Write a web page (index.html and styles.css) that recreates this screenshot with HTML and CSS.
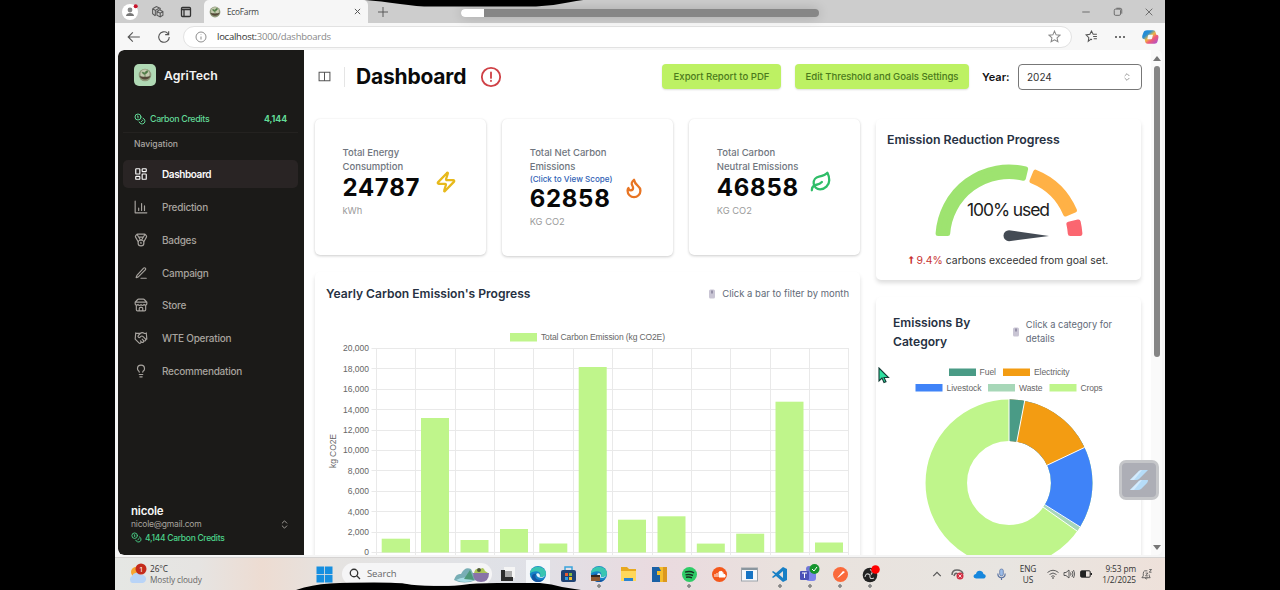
FILE: index.html
```html
<!DOCTYPE html>
<html lang="en">
<head>
<meta charset="utf-8">
<title>EcoFarm</title>
<link rel="stylesheet" href="styles.css">
</head>
<body>
<svg class="defs" width="0" height="0">
  <defs>
    <symbol id="coins" viewBox="0 0 24 24"><circle cx="8" cy="8" r="6"/><path d="M18.09 10.37A6 6 0 1 1 10.34 18M7 6h1v4M16.7 13.9l.7.7-2.8 2.8"/></symbol>
    <symbol id="updown" viewBox="0 0 24 24"><path d="m7 15 5 5 5-5M7 9l5-5 5 5"/></symbol>
    <symbol id="sprout" viewBox="0 0 20 20"><circle cx="10" cy="10" r="9" fill="#8f9a7b"/><circle cx="10" cy="8.5" r="6.5" fill="#c5caaf"/><path d="M2 11c2 2 14 2 16 0a8.6 8.6 0 0 1-16 0z" fill="#544838"/><path d="M10 13V6M10 9C7 9 6 7 6 6c2 0 4 1 4 3zm0-1c0-3 2-4 4-4 0 3-2 4-4 4z" fill="#4d7a45" stroke="#4d7a45"/></symbol>
    <symbol id="mouse" viewBox="0 0 8 12"><rect x="1" y="1.500" width="6" height="9" rx="1.500" fill="#c9c5d4"/><rect x="3" y="2.500" width="2" height="3" fill="#9691a8"/></symbol>
    <symbol id="edge" viewBox="0 0 20 20"><circle cx="10" cy="10" r="9" fill="#1683c7"/><path d="M1 10C1 0 17-1 19 9c0 4-4 5-7 4 2-4-1-6-4-6-3 0-6 1-7 3z" fill="#39c5b2"/><path d="M8 10c-3 5 2 8 8 6-3 4-9 4-12 0-2-3 0-7 4-6z" fill="#1456a2"/><path d="M8 10c2-2 5 0 4 3 2 1 5 0 6-2-1 4-9 5-10-1z" fill="#e6f5fb"/></symbol>
    <linearGradient id="cop" x1="0" y1="0" x2="1" y2="1"><stop offset="0" stop-color="#1787e0"/><stop offset=".3" stop-color="#2a8fd0"/><stop offset=".48" stop-color="#eeb842"/><stop offset=".65" stop-color="#ef5a76"/><stop offset="1" stop-color="#a04fe0"/></linearGradient>
  </defs>
</svg>

<div class="window">
  <header class="tabbar">
    <div class="tab-tools">
      <span class="profile"><svg width="16" height="16" viewBox="0 0 16 16"><circle cx="8" cy="8" r="8" fill="#fff"/><circle cx="8" cy="6" r="2.4" fill="#888"/><path d="M4 12c0-4 8-4 8 0z" fill="#777"/><circle cx="13.7" cy="2.2" r="2" fill="#c8152d"/></svg></span>
      <svg class="line" width="13" height="13" viewBox="0 0 24 24"><path d="M3 7l7-4 7 3v3M3 7v9l5 4M3 7l5 3 7-4M8 10v10M11 12l5-3 6 3v7l-5 3-6-3zM11 12l6 3 5-3M17 15v7"/></svg>
      <svg class="line bold" width="12" height="12" viewBox="0 0 24 24"><rect x="3" y="3" width="18" height="18" rx="2"/><path d="M3 7h18M8 7v14"/></svg>
    </div>
    <div class="tab"><svg width="12" height="12"><use href="#sprout"/></svg><span class="tab-title">EcoFarm</span><svg class="line" width="9" height="9" viewBox="0 0 24 24"><path d="M5 5l14 14M19 5L5 19" stroke-width="2.6"/></svg></div>
    <svg class="line plus" width="12" height="12" viewBox="0 0 24 24"><path d="M12 2v20M2 12h20"/></svg>
    <div class="winbtns">
      <svg class="line" width="10" height="10" viewBox="0 0 24 24"><path d="M3 12h18"/></svg>
      <svg class="line" width="10" height="10" viewBox="0 0 24 24"><rect x="3" y="5" width="15" height="15" rx="3"/><path d="M8 3h9a4 4 0 0 1 4 4v9"/></svg>
      <svg class="line" width="10" height="10" viewBox="0 0 24 24"><path d="M4 4l16 16M20 4L4 20"/></svg>
    </div>
  </header>

  <div class="toolbar">
    <svg class="line" width="14" height="14" viewBox="0 0 24 24"><path d="M22 12H3M10 4l-8 8 8 8"/></svg>
    <svg class="line" width="14" height="14" viewBox="0 0 24 24"><path d="M21 12a9 9 0 1 1-3-6.700L20 7M20 2v6h-6"/></svg>
    <div class="address">
      <svg class="line faint" width="12" height="12" viewBox="0 0 24 24"><circle cx="12" cy="12" r="10"/><path d="M12 11v6M12 7v1"/></svg>
      <span class="url"><b>localhost:</b>3000/dashboards</span>
      <svg class="line faint" width="13" height="13" viewBox="0 0 24 24"><path d="M12 2l3 7 7 .7-5.300 4.800 1.600 7.200L12 18l-6.300 3.700 1.600-7.200L2 9.700 9 9z"/></svg>
    </div>
    <svg class="line" width="13" height="13" viewBox="0 0 24 24"><path d="M13 18l-2-1-5 4 1-7-5-5 7-1 3-6 3 6h7M15 12h7M16 16h6"/></svg>
    <svg width="12" height="12" viewBox="0 0 24 24" fill="#444"><circle cx="4" cy="12" r="2"/><circle cx="12" cy="12" r="2"/><circle cx="20" cy="12" r="2"/></svg>
    <svg width="18" height="18" viewBox="0 0 24 24"><path d="M8 3h8c2 0 3 1 3.500 3l.8 3c3 0 3.500 2 2.700 5l-1 4c-.7 2-2 3-4 3H9c-2 0-3-1-3.500-3L5 15c-3 0-4-2-3.200-5l1.500-4C4 4 6 3 8 3zm3 6c-1 0-1.500.5-1.800 1.500L8.500 15H13c1 0 1.500-.5 1.800-1.500L16 9z" fill="url(#cop)" fill-rule="evenodd"/></svg>
  </div>

  <div class="app">
    <aside class="sidebar">
      <div class="brand"><span class="logo"><svg width="14" height="14"><use href="#sprout"/></svg></span>AgriTech</div>
      <div class="credits"><svg class="ic" width="12" height="12"><use href="#coins"/></svg><span>Carbon Credits</span><b>4,144</b></div>
      <div class="navlabel">Navigation</div>
      <nav>
        <a class="item active"><svg class="ic" width="14" height="14" viewBox="0 0 24 24"><rect x="3" y="3" width="7" height="9" rx="1"/><rect x="14" y="3" width="7" height="5" rx="1"/><rect x="14" y="12" width="7" height="9" rx="1"/><rect x="3" y="16" width="7" height="5" rx="1"/></svg>Dashboard</a>
        <a class="item"><svg class="ic" width="14" height="14" viewBox="0 0 24 24"><path d="M2 2v20h20M8 18v-4M13 18V6M18 18v-8"/></svg>Prediction</a>
        <a class="item"><svg class="ic" width="14" height="14" viewBox="0 0 24 24"><path d="M7.200 15 2.700 7.100a2 2 0 0 1 .1-2.200l1.600-2.100A2 2 0 0 1 6 2h12a2 2 0 0 1 1.600.8l1.600 2.100a2 2 0 0 1 .1 2.200L16.800 15M11 12 5.100 2.200M13 12l5.900-9.800M8 7h8M12 18v-2h-.5"/><circle cx="12" cy="17" r="5"/></svg>Badges</a>
        <a class="item"><svg class="ic" width="14" height="14" viewBox="0 0 24 24"><path d="M12 21h9M16.400 3.600a1 1 0 0 1 3 3L7.400 18.600a2 2 0 0 1-.9.500l-2.800.8.800-2.800a2 2 0 0 1 .5-.9z"/></svg>Campaign</a>
        <a class="item"><svg class="ic" width="14" height="14" viewBox="0 0 24 24"><path d="m2 7 4.400-4.400A2 2 0 0 1 7.800 2h8.400a2 2 0 0 1 1.400.6L22 7M4 12v8a2 2 0 0 0 2 2h12a2 2 0 0 0 2-2v-8M15 22v-4a2 2 0 0 0-2-2h-2a2 2 0 0 0-2 2v4M2 7h20v3a2.700 2.700 0 0 1-5 1 2.700 2.700 0 0 1-5 0 2.700 2.700 0 0 1-5 0 2.700 2.700 0 0 1-5-1z"/></svg>Store</a>
        <a class="item"><svg class="ic" width="14" height="14" viewBox="0 0 24 24"><path d="m11 17 2 2a1 1 0 1 0 3-3M14 14l2.500 2.500a1 1 0 1 0 3-3l-3.900-3.900a3 3 0 0 0-4.200 0l-.9.900a1 1 0 1 1-3-3l2.800-2.800a5.800 5.800 0 0 1 7.100-.9l.5.300a2 2 0 0 0 1.400.2L21 4M21 3l1 11h-2M3 3 2 14l6.500 6.500a1 1 0 1 0 3-3M3 4h8"/></svg>WTE Operation</a>
        <a class="item"><svg class="ic" width="14" height="14" viewBox="0 0 24 24"><path d="M15 14c.2-1 .7-1.700 1.500-2.500 1-.9 1.500-2.200 1.500-3.500A6 6 0 0 0 6 8c0 1 .2 2.200 1.500 3.500.7.7 1.300 1.500 1.500 2.500M9 18h6M10 22h4"/></svg>Recommendation</a>
      </nav>
      <div class="user">
        <div><div class="uname">nicole</div><div class="umail">nicole@gmail.com</div><div class="ucred"><svg class="ic" width="11" height="11"><use href="#coins"/></svg>4,144 Carbon Credits</div></div>
        <svg class="ic" width="11" height="11"><use href="#updown"/></svg>
      </div>
    </aside>

    <main class="main">
      <div class="head">
        <svg class="line toggle" width="13" height="13" viewBox="0 0 24 24"><path d="M2 4h20v16H2zM12 4v16"/></svg>
        <span class="divider"></span>
        <h1>Dashboard</h1>
        <svg class="alert" width="22" height="22" viewBox="0 0 24 24"><circle cx="12" cy="12" r="10"/><path d="M12 7v6M12 16v.4"/></svg>
        <button class="btn b1">Export Report to PDF</button>
        <button class="btn b2">Edit Threshold and Goals Settings</button>
        <span class="year">Year:</span>
        <div class="select"><span>2024</span><svg class="ic" width="10" height="10"><use href="#updown"/></svg></div>
      </div>

      <div class="columns">
        <section class="left">
          <div class="stats">
            <div class="card stat"><div><p class="label">Total Energy<br>Consumption</p><p class="num">24787</p><p class="unit">kWh</p></div>
              <svg class="sic yellow" width="22" height="22" viewBox="0 0 24 24"><path d="M4 14a1 1 0 0 1-.8-1.600l9.900-10.200a.5.500 0 0 1 .9.500l-1.900 6A1 1 0 0 0 13 10h7a1 1 0 0 1 .8 1.600l-9.900 10.200a.5.500 0 0 1-.9-.5l1.900-6A1 1 0 0 0 11 14z"/></svg></div>
            <div class="card stat tall"><div><p class="label">Total Net Carbon<br>Emissions</p><p class="scope">(Click to View Scope)</p><p class="num">62858</p><p class="unit">KG CO2</p></div>
              <svg class="sic orange" width="22" height="22" viewBox="0 0 24 24"><path d="M8.500 14.500A2.500 2.500 0 0 0 11 12c0-1.400-.5-2-1-3-1.100-2.100-.2-4.100 2-6 .5 2.500 2 4.900 4 6.500s3 3.500 3 5.500a7 7 0 1 1-14 0c0-1.200.4-2.300 1-3a2.500 2.500 0 0 0 2.500 2.500z"/></svg></div>
            <div class="card stat"><div><p class="label">Total Carbon<br>Neutral Emissions</p><p class="num">46858</p><p class="unit">KG CO2</p></div>
              <svg class="sic green" width="22" height="22" viewBox="0 0 24 24"><path d="M11 20A7 7 0 0 1 9.800 6.100C15.500 5 17 4.500 19 2c1 2 2 4.200 2 8 0 5.500-4.800 10-10 10zM2 21c0-3 1.900-5.400 5.100-6 2.400-.5 4.900-2 5.900-3"/></svg></div>
          </div>
          <div class="card chart">
            <div class="chart-head"><h2 class="t-year">Yearly Carbon Emission's Progress</h2><span class="hint"><svg width="8" height="12"><use href="#mouse"/></svg>Click a bar to filter by month</span></div>
            <svg class="plot" width="545" height="242" viewBox="315 315 545 242">
              <rect x="510" y="333" width="27" height="8.500" fill="#bff58b"/>
              <text x="541" y="340.300" textLength="124">Total Carbon Emission (kg CO2E)</text>
              <path class="grid" d="M371.500 348.500H849M371.500 368.500H849M371.500 389.500H849M371.500 409.500H849M371.500 430.500H849M371.500 450.500H849M371.500 470.500H849M371.500 491.500H849M371.500 511.500H849M371.500 532.500H849M371.500 552.500H849M376.500 348V555M415.500 348V555M455.500 348V555M494.500 348V555M533.500 348V555M573.500 348V555M612.500 348V555M652.500 348V555M691.500 348V555M730.500 348V555M770.500 348V555M809.500 348V555M848.500 348V555"/>
              <g fill="#bff58b"><rect x="381.700" y="538.700" width="28.300" height="13.800"/><rect x="421" y="418" width="28" height="134.500"/><rect x="460.500" y="540" width="28" height="12.500"/><rect x="500" y="529" width="28" height="23.500"/><rect x="539.300" y="543.500" width="28" height="9"/><rect x="578.700" y="367" width="28" height="185.500"/><rect x="618" y="519.700" width="28" height="32.800"/><rect x="657.500" y="516.300" width="28" height="36.200"/><rect x="696.800" y="543.600" width="28" height="8.900"/><rect x="736.200" y="533.700" width="28" height="18.800"/><rect x="775.500" y="401.700" width="28" height="150.800"/><rect x="815" y="542.500" width="28" height="10"/></g>
              <g text-anchor="end"><text x="369" y="351.300">20,000</text><text x="369" y="371.700">18,000</text><text x="369" y="392.100">16,000</text><text x="369" y="412.600">14,000</text><text x="369" y="433">12,000</text><text x="369" y="453.400">10,000</text><text x="369" y="473.900">8,000</text><text x="369" y="494.300">6,000</text><text x="369" y="514.700">4,000</text><text x="369" y="535.200">2,000</text><text x="369" y="555">0</text></g>
              <text transform="translate(336 468) rotate(-90)" textLength="34">kg CO2E</text>
            </svg>
          </div>
        </section>

        <section class="right">
          <div class="card gauge">
            <h2 class="t-red">Emission Reduction Progress</h2>
            <svg width="265" height="95" viewBox="876 155 265 95">
              <g stroke-width="5" stroke-linejoin="round">
                <path fill="#9ee370" stroke="#9ee370" d="M938.100 233.500A71 71 0 0 1 1025.600 169L1023.400 178.200A61.500 61.500 0 0 0 947.700 233.500z"/>
                <path fill="#ffb146" stroke="#ffb146" d="M1035.600 172.200A71 71 0 0 1 1074.400 210.300L1065.600 214A61.500 61.500 0 0 0 1032 181z"/>
                <path fill="#fb6670" stroke="#fb6670" d="M1078.200 222A71 71 0 0 1 1079.900 233.500H1070.300A61.500 61.500 0 0 0 1068.900 224.200z"/>
              </g>
              <path fill="#444b54" d="M1009 230.200L1049 236 1009 241.200A5.500 5.500 0 0 1 1009 230.200z"/>
              <text class="used" x="967" y="215.500" textLength="83">100% used</text>
            </svg>
            <p class="exceed"><span><b>⭡</b> 9.4%</span> carbons exceeded from goal set.</p>
          </div>
          <div class="card donut">
            <div class="donut-head"><h2>Emissions By<br>Category</h2><span class="hint two"><svg width="8" height="12"><use href="#mouse"/></svg><span>Click a category for<br>details</span></span></div>
            <svg class="plot" width="265" height="205" viewBox="876 360 265 205">
              <g><rect x="949" y="368.500" width="27" height="7.500" fill="#4a9b86"/><rect x="1003" y="368.500" width="27" height="7.500" fill="#f39c12"/><rect x="915.500" y="384" width="27" height="7.500" fill="#3f83f8"/><rect x="988" y="384" width="27" height="7.500" fill="#a7d7b8"/><rect x="1049.500" y="384" width="27" height="7.500" fill="#bff58b"/></g>
              <text x="979.500" y="375.200" textLength="16.500">Fuel</text><text x="1034" y="375.200" textLength="35.500">Electricity</text><text x="946.500" y="390.500" textLength="35">Livestock</text><text x="1019" y="390.500" textLength="23.500">Waste</text><text x="1080.500" y="390.500" textLength="22">Crops</text>
              <g transform="rotate(-90 1009 483)" fill="none" stroke-width="41.500">
                <circle cx="1009" cy="483" r="62.700" stroke="#bff58b"/>
                <circle cx="1009" cy="483" r="62.700" stroke="#a7d7b8" pathLength="360" stroke-dasharray="125.200 360"/>
                <circle cx="1009" cy="483" r="62.700" stroke="#3f83f8" pathLength="360" stroke-dasharray="121.800 360"/>
                <circle cx="1009" cy="483" r="62.700" stroke="#f39c12" pathLength="360" stroke-dasharray="64.800 360"/>
                <circle cx="1009" cy="483" r="62.700" stroke="#4a9b86" pathLength="360" stroke-dasharray="10.800 360"/>
              </g>
              <path stroke="#fff" d="M1009 442V399M1016.700 442.500L1024.700 400.900M1046.500 465.500L1084.700 447.400M1044.500 504.500L1080 526.800M1043 507L1077.300 531.200"/>
            </svg>
          </div>
        </section>
      </div>
    </main>
    <div class="scroll"><span class="up"></span><span class="thumb"></span><span class="down"></span></div>
  </div>

  <footer class="taskbar">
    <div class="weather"><svg width="20" height="22" viewBox="0 0 20 22"><circle cx="8" cy="9" r="5" fill="#f7a531"/><path d="M4 20a4 4 0 0 1 0-7 5 5 0 0 1 9-1 4 4 0 0 1 2 8z" fill="#b9d4f7"/><circle cx="13" cy="6" r="5.500" fill="#c42b1c"/><text x="11" y="9" font-size="8" fill="#fff">1</text></svg><div>26°C<br><span>Mostly cloudy</span></div></div>
    <svg class="start" width="17" height="17" viewBox="0 0 17 17" fill="#168fe0"><rect x=".5" y=".5" width="7.600" height="7.600"/><rect x="8.900" y=".5" width="7.600" height="7.600"/><rect x=".5" y="8.900" width="7.600" height="7.600"/><rect x="8.900" y="8.900" width="7.600" height="7.600"/></svg>
    <div class="search"><svg class="line bold" width="12" height="12" viewBox="0 0 24 24"><circle cx="10" cy="10" r="7.500"/><path d="M15.500 15.500L22 22"/></svg><span>Search</span><svg width="36" height="17" viewBox="0 0 36 17"><path d="M0 14Q2 7 7 8 11 0 17 3L22 14Q10 19 0 14z" fill="#78aeb5"/><path d="M2 14q8-5 18 0-9 4-18 0z" fill="#a9dde6"/><path d="M10 13L16 4l4 10z" fill="#4c9879"/><path d="M19 7h16q0 9-8 9t-8-9z" fill="#8873a7"/><path d="M20 7q2-7 5-2 4-6 6 0l3 2z" fill="#abc657"/><circle cx="25" cy="4" r="2" fill="#4d5739"/></svg></div>
    <div class="apps">
      <span><svg width="16" height="16" viewBox="0 0 16 16"><rect x="4" y="1" width="11" height="11" fill="#f5f5f5"/><path d="M1 4h4v7h8v4H1z" fill="#2c2c2c"/><rect x="5" y="5" width="7" height="6" fill="#aaa"/></svg></span>
      <span class="cur"><svg width="18" height="18"><use href="#edge"/></svg></span>
      <span><svg width="17" height="17" viewBox="0 0 17 17"><path d="M5 4V1h7v3" fill="none" stroke="#3aa4dc" stroke-width="1.500"/><rect x="1" y="4" width="15" height="12" rx="2" fill="#1f4274"/><path d="M5 7h3v3H5z" fill="#e85b31"/><path d="M9 7h3v3H9z" fill="#85ba40"/><path d="M5 11h3v3H5z" fill="#2f9de3"/><path d="M9 11h3v3H9z" fill="#f4bd2b"/></svg></span>
      <span class="run"><svg width="18" height="18" viewBox="0 0 18 18"><use href="#edge" width="18" height="18"/><path d="M1 10h9v6H1z" fill="#8d5932"/><path d="M1 10h9v2H1z" fill="#352820"/></svg></span>
      <span><svg width="17" height="16" viewBox="0 0 17 16"><path d="M1 1h6l2 2h7v12H1z" fill="#e8a91f"/><path d="M1 5h15v10H1z" fill="#ffd75b"/><path d="M4 12h9v3H4z" fill="#2b83cf"/></svg></span>
      <span><svg width="17" height="17" viewBox="0 0 17 17"><path d="M1 1h15v15H1z" fill="#1b60a5"/><path d="M8 1h8v15H9V9H6V5h4z" fill="#f4bd2d"/><path d="M12 1h4v15h-4z" fill="#dc981f"/></svg></span>
      <span class="run"><svg width="17" height="17" viewBox="0 0 17 17"><circle cx="8.500" cy="8.500" r="7.500" fill="#2fcc67"/><path d="M4 6.200q5-1.500 9 .6M4.500 8.900q4-1 7.500.6M5 11.300q3-.8 6 .5" fill="none" stroke="#173422" stroke-width="1.400"/></svg></span>
      <span><svg width="17" height="17" viewBox="0 0 17 17"><circle cx="8.500" cy="8.500" r="7.500" fill="#f4581c"/><path d="M8 6q4-2 4 2 3 0 2 3H8zM4 8v3M6 7v4" fill="#fff" stroke="#fff"/></svg></span>
      <span><svg width="17" height="15" viewBox="0 0 17 15"><rect x=".5" y="1" width="16" height="13" fill="#f5f7f9" stroke="#9ca3aa"/><path d="M5 4h7v8H5z" fill="#1674c4"/><path d="M1 1h15v2H1z" fill="#8b969f"/></svg></span>
      <span class="run"><svg width="17" height="17" viewBox="0 0 17 17"><path d="M12 1l4 2v11l-4 2-7-6-3 2-1-1 3-2.500L1 6l1-1 3 2zM12 5L8 8.500l4 3.500z" fill="#187fc5" fill-rule="evenodd"/></svg></span>
      <span class="run"><svg width="21" height="20" viewBox="0 0 21 20"><rect x="7" y="7" width="10" height="10" rx="3" fill="#7b83eb"/><circle cx="10" cy="5" r="3" fill="#7176d8"/><rect x="1" y="7" width="9" height="9" rx="1" fill="#4c51b7"/><path d="M3 9h5M5.500 9v5" stroke="#fff"/><circle cx="15.500" cy="5" r="5" fill="#16952d"/><path d="M13 5l2 2 3-4" fill="none" stroke="#fff"/></svg></span>
      <span class="run"><svg width="17" height="17" viewBox="0 0 17 17"><circle cx="8.500" cy="8.500" r="7.500" fill="#fa6a3b"/><path d="M5 12l6-7 2 1-6 5z" fill="#fff"/></svg></span>
      <span class="run"><svg width="19" height="19" viewBox="0 0 19 19"><circle cx="9" cy="10" r="7.300" fill="#222"/><path d="M9 4.500q4 2 1 5M4 12q1-5 5-2M13 13q-5 2-4-3" fill="none" stroke="#ccc" stroke-width="1.100"/><circle cx="14.500" cy="4.500" r="4.300" fill="#f00"/></svg></span>
    </div>
    <div class="tray">
      <svg class="line" width="10" height="10" viewBox="0 0 24 24"><path d="M3 17l9-9 9 9" stroke-width="2.800"/></svg>
      <svg class="cc" width="13" height="12" viewBox="0 0 13 12"><path d="M1 7q0-5 5-5 5 0 6 4M3 8q1-4 4-2" fill="none" stroke="#666" stroke-width="1.500"/><circle cx="9" cy="8" r="3.500" fill="#d32f42"/><path d="M7.500 6.500l3 3M10.500 6.500l-3 3" stroke="#fff" stroke-width=".8"/></svg>
      <svg class="od" width="13" height="9" viewBox="0 0 13 9"><path d="M3 8.500Q-.5 8 1 5q1-1 2-1 1-4 5-3 2 .5 2.500 3 3 .5 2 3-.5 1.500-2 1.500z" fill="#1687dd"/></svg>
      <svg class="mic" width="11" height="13" viewBox="0 0 24 26"><rect x="8" y="1" width="8" height="15" rx="4" fill="#9bbce8" stroke="#5972a0" stroke-width="1.500"/><path d="M4 11c0 12 16 12 16 0M12 20v5" fill="none" stroke="#5972a0" stroke-width="2.500"/></svg>
      <div class="lang">ENG<br>US</div>
      <svg class="line" width="12" height="12" viewBox="0 0 24 24"><path d="M1 9q11-9 22 0M5 13q7-6 14 0M8.500 17q3.500-3 7 0"/><circle cx="12" cy="20" r="1"/></svg>
      <svg class="line" width="12" height="12" viewBox="0 0 24 24"><path d="M2 9h4l6-5v16l-6-5H2zM15 9q2 3 0 6M18 6q4 6 0 12M21 4q5 8 0 16"/></svg>
      <svg class="bat" width="12" height="8" viewBox="0 0 12 8"><rect x=".6" y=".8" width="9.600" height="6.400" rx="1" fill="none" stroke="#222"/><path d="M1 1h5v6H1zM10.500 3H12v2h-1.500z" fill="#222"/></svg>
      <div class="time">9:53 pm<br>1/2/2025</div>
      <svg class="line" width="11" height="11" viewBox="0 0 24 24"><path d="M14 4H8Q5 5 5 10v5l-3 4h18l-2-4v-3M9 20q2 4 5 0M10 9h5l-5 6h5M18 1h5l-5 6h5"/></svg>
    </div>
  </footer>

  <div class="progress"><span></span></div>
  <div class="widget"><svg width="20" height="24" viewBox="0 0 20 24"><path d="M1 12L10 3q1-1 3-1h6l-9 9q-1 1-3 1zM1 22l9-9q1-1 3-1h6q0 2-1 3l-6 6q-1 1-3 1z" fill="#b6dcf8"/><path d="M1 12l9-9q1-1 3-1l-8 10zM1 22l9-9q1-1 3-1L5 22z" fill="#d4ebfd"/></svg></div>
  <svg class="cursor" width="12" height="17" viewBox="0 0 12 17"><path d="M1 1v13l3-3 2 4.500 2-.8-2-4.200h4.500z" fill="#2fe0a0" stroke="#143b35" stroke-width="1.100"/></svg>
  <svg class="edge-top" width="230" height="8" viewBox="365 0 230 8"><path d="M365 0Q380 1 400 4T436 6.500H536Q552 6 568 2.500T592 0z"/></svg>
  <svg class="edge-bottom" width="285" height="8" viewBox="296 582 285 8"><path d="M296 590Q312 584.500 330 583.500T374 582.500 407 584 434 586 464 584.700 500 583H540Q552 584 562 587L581 590z"/></svg>
</div>
</body>
</html>
```
FILE: styles.css
```css
* { box-sizing: border-box; }
body { margin: 0; width: 1280px; height: 590px; overflow: hidden; background: #000; font-family: Inter, "Liberation Sans", sans-serif; color: #111; }
p, h1, h2 { margin: 0; }
svg { flex: none; display: block; }
.defs { position: absolute; }
.line { fill: none; stroke: #555; stroke-width: 1.9; }
.line.bold { stroke-width: 2.6; stroke: #333; }
.line.faint { stroke: #888; }
.ic { fill: none; stroke: currentColor; stroke-width: 2; stroke-linecap: round; stroke-linejoin: round; }

.window { position: relative; width: 1050px; height: 590px; margin-left: 115px; background: #f5f5f5; overflow: hidden; display: flex; flex-direction: column; }

/* Browser chrome */
.tabbar { height: 23px; background: #cdcdcd; display: flex; align-items: center; flex: none; }
.tab-tools { width: 89px; padding-left: 7px; display: flex; align-items: center; gap: 13px; }
.tab-tools svg:nth-of-type(2) { margin-left: 3px; }
.tab { width: 164px; height: 23px; background: #f6f6f6; border-radius: 5px 5px 0 0; padding: 0 6px 0 5px; display: flex; align-items: center; }
.tab-title { font: 8.300px "Open Sans", sans-serif; color: #444; margin-left: 6px; flex: 1; letter-spacing: -.25px; }
.plus { margin-left: 9px; }
.winbtns { margin-left: auto; padding-right: 11px; display: flex; gap: 21.500px; }
.toolbar { height: 27px; background: #f7f7f7; display: flex; align-items: center; flex: none; padding: 0 6px 0 12px; }
.toolbar > svg + svg { margin-left: 16px; }
.toolbar > .address { margin-left: 12px; margin-right: 13px; }
.toolbar > svg:last-child { margin-left: 15px; }
.address { width: 889px; height: 22px; background: #fff; border: 1px solid #e2e2e2; border-radius: 11px; display: flex; align-items: center; padding: 0 10px 0 11px; }
.url { font: 9.500px "Open Sans", sans-serif; color: #888; margin-left: 10px; flex: 1; letter-spacing: -.25px; }
.url b { font-weight: 400; color: #333; }

.app { height: 505px; display: flex; flex: none; margin: 0 3px; background: #fff; border-radius: 6px; overflow: hidden; }

/* Sidebar */
.sidebar { width: 186px; flex: none; background: #1b1a18; color: #a7a39e; display: flex; flex-direction: column; padding: 0 6px 0 5px; border-radius: 6px 0 0 6px; }
.brand { display: flex; align-items: center; gap: 8px; height: 50px; padding-left: 11px; font-size: 12.300px; font-weight: 600; color: #f4f4f3; }
.logo { width: 22px; height: 22px; border-radius: 5px; background: #b0d9b4; display: flex; align-items: center; justify-content: center; }
.credits { height: 33px; padding: 5px 11px 0; display: flex; align-items: center; border-bottom: 1px solid #242220; color: #62d996; font-size: 8.800px; letter-spacing: -.3px; font-weight: 500; }
.credits svg { margin-right: 4px; }
.credits b { margin-left: auto; font-weight: 700; letter-spacing: -.1px; }
.navlabel { font-size: 8.600px; font-weight: 500; color: #aaa6a2; padding: 6px 11px 0; height: 27px; }
nav { display: flex; flex-direction: column; gap: 4.850px; }
.item { height: 28px; border-radius: 5px; display: flex; align-items: center; gap: 14px; padding-left: 11px; font-size: 10px; font-weight: 500; letter-spacing: -.25px; }
.active { background: #292424; color: #fafafa; font-weight: 600; letter-spacing: -.4px; }
.user { margin-top: auto; height: 54px; padding: 0 8px 8px; display: flex; align-items: center; justify-content: space-between; }
.uname { font-size: 11.500px; line-height: 14px; font-weight: 600; letter-spacing: -.2px; color: #f6f6f5; }
.umail { font-size: 8.500px; line-height: 13px; letter-spacing: -.2px; }
.ucred { font-size: 8.500px; line-height: 14px; font-weight: 500; letter-spacing: -.3px; color: #4cd38a; display: flex; align-items: center; gap: 3px; }

/* Dashboard */
.main { width: 847px; flex: none; display: flex; flex-direction: column; }
.head { height: 53px; flex: none; display: flex; align-items: center; padding-right: 9px; }
.toggle { margin-left: 14px; }
.divider { width: 1px; height: 20px; background: #e5e5e5; margin: 0 11px 0 13px; }
h1 { font-size: 21px; font-weight: 700; letter-spacing: -.2px; width: 124px; white-space: nowrap; color: #0a0a0a; }
.alert { fill: none; stroke: #cf4146; stroke-width: 2; stroke-linecap: round; }
.btn { height: 25px; border: 0; border-radius: 4px; background: #bdf163; color: #4b7a1c; font: 500 9.600px Inter, sans-serif; padding: 0; box-shadow: 0 1px 2px #0002; white-space: nowrap; }
.b1 { width: 119px; margin-left: auto; }
.b2 { width: 174px; margin-left: 14px; letter-spacing: -.05px; }
.year { font-size: 11px; font-weight: 600; margin-left: 13px; width: 36px; }
.select { width: 124px; height: 26px; border: 1px solid #777; border-radius: 4px; display: flex; align-items: center; justify-content: space-between; padding: 0 9px 0 8px; font-size: 10px; color: #333; }
.select svg { color: #888; }
.columns { display: flex; gap: 16px; padding: 16px 9px 0 11px; }
.left { width: 545px; flex: none; }
.right { width: 265px; flex: none; }
.card { background: #fff; border-radius: 5px; box-shadow: 0 1px 3px #0003, 0 0 1px #0001; }
.stats { display: flex; gap: 16.500px; align-items: flex-start; height: 153px; }
.stat { width: 170.700px; height: 136px; padding: 27px 0 0 27.500px; display: flex; }
.tall { height: 137px; }
.stat > div { width: 93px; }
.stat:first-child > div { width: 92px; }
.stat > svg { margin-top: 25px; }
.tall > svg { margin-top: 31px; }
.label { font-size: 9.500px; line-height: 14px; font-weight: 500; color: #6f757e; white-space: nowrap; }
.scope { font-size: 8.100px; line-height: 11px; color: #315fb5; white-space: nowrap; font-weight: 500; }
.num { font-size: 24px; line-height: 27px; font-weight: 700; letter-spacing: .7px; color: #080808; }
.unit { font-size: 9.300px; line-height: 14px; margin-top: 3px; color: #9b9b9b; }
.sic { fill: none; stroke-width: 2.500; stroke-linecap: round; stroke-linejoin: round; }
.yellow { stroke: #e7b91b; } .orange { stroke: #e87524; } .green { stroke: #2fbd68; }
.chart { height: 300px; }
.chart, .donut, .gauge { box-shadow: 0 3px 4px #0002; }
.chart-head { height: 43px; padding: 0 11px; display: flex; align-items: center; justify-content: space-between; }
h2 { font-size: 12.100px; font-weight: 600; color: #273142; white-space: nowrap; }
.hint { font-size: 9.500px; color: #626a78; display: flex; align-items: center; gap: 6px; white-space: nowrap; }
.plot { font-family: "Liberation Sans", sans-serif; font-size: 8.500px; fill: #666; overflow: visible; }
.grid { fill: none; stroke: #e9e9e9; stroke-width: 1; }
.gauge { height: 161px; }
.gauge h2 { height: 36px; padding: 13px 0 0 11px; font-size: 12.300px; }
.used { font: 17.500px Inter, sans-serif; fill: #1c1c1c; }
.exceed { font-size: 10.450px; line-height: 22px; text-align: center; color: #333; white-space: nowrap; }
.exceed span { color: #c83232; }
.donut { height: 300px; margin-top: 17px; }
.donut-head { height: 63px; display: flex; align-items: center; justify-content: space-between; padding: 7px 29px 0 17px; }
.donut-head h2 { line-height: 19px; }
.two { line-height: 14px; font-size: 9.300px; }

.scroll { flex: 1; background: #fafafa; display: flex; flex-direction: column; align-items: center; padding: 6px 0 5px 1px; }
.up { border: 4px solid transparent; border-top: 0; border-bottom: 5px solid #777; }
.thumb { width: 6px; height: 291px; border-radius: 3px; background: #858585; margin-top: 5px; }
.down { border: 4px solid transparent; border-bottom: 0; border-top: 5px solid #777; margin-top: auto; }

/* Taskbar */
.taskbar { height: 33px; margin-top: 2px; border-top: 1px solid #d5d3d2; background: linear-gradient(90deg, #e5e7e4, #e6e4e2 8%, #eddcd2 14%, #e5e3e1 21%, #dfe1e7 38%, #eadadf 52%, #e9e2dd 65%, #e8e5e1 85%, #eee1da); display: flex; align-items: center; font: 8.300px/11.500px "Open Sans", sans-serif; letter-spacing: -.1px; color: #333; flex: none; }
.weather { width: 201px; padding-left: 13px; display: flex; align-items: center; gap: 2px; }
.weather span { color: #666; }
.search { width: 150px; height: 22px; border-radius: 11px; background: #f5f5f6; margin-left: 9px; display: flex; align-items: center; padding: 0 2px 0 7px; font-size: 9.500px; }
.search span { margin: 0 auto 0 6px; color: #666; }
.apps { display: flex; margin-left: 1px; }
.apps span { width: 30.200px; height: 28px; display: flex; align-items: center; justify-content: center; }
.apps .cur { background: linear-gradient(90deg, transparent 3px, #f4f6f9 3px, #f4f6f9 27px, transparent 27px); }
.apps .run { background: radial-gradient(circle, #888 1.500px, transparent 2px) center 13px / 30px 26px no-repeat; }
.tray { display: flex; align-items: center; margin-left: auto; padding-right: 13px; }
.cc { margin-left: 9px; } .od { margin-left: 9px; } .mic { margin-left: 10px; }
.lang { width: 24px; text-align: center; margin: 0 7px 0 9px; }
.tray .line + .line { margin-left: 4px; }
.bat { margin-left: 5px; }
.time { width: 44px; text-align: right; margin-right: 5px; }

/* Floating layers */
.progress { position: absolute; left: 346px; top: 9px; width: 358px; height: 8px; border-radius: 4px; background: #868686; box-shadow: 0 0 12px #0003; }
.progress span { display: block; width: 23px; height: 8px; background: #fff; border-radius: 4px 0 0 4px; }
.widget { position: absolute; left: 1004px; top: 460px; width: 40px; height: 40px; border-radius: 7px; background: #adaeb6; border: 3px solid #c5c6c9; display: flex; align-items: center; justify-content: center; }
.cursor { position: absolute; left: 763px; top: 367px; }
.edge-top { position: absolute; left: 250px; top: 0; }
.edge-bottom { position: absolute; left: 181px; top: 582px; }
```
